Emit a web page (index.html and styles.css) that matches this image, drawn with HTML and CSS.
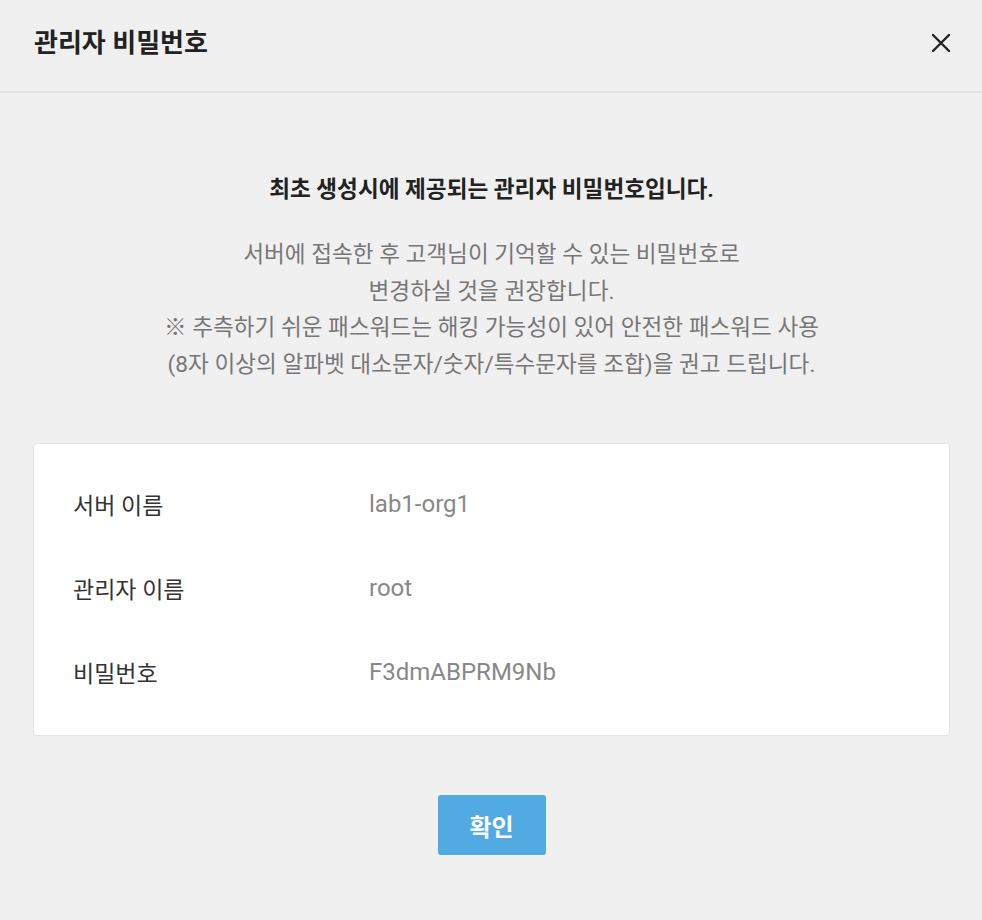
FILE: index.html
```html
<!DOCTYPE html>
<html lang="ko">
<head>
    <meta charset="UTF-8">
    <meta name="viewport" content="width=device-width, initial-scale=1.0">
    <title>관리자 비밀번호</title>
    <link rel="stylesheet" href="styles.css">
</head>
<body>

    <div class="dialog">
        <div class="dialog-header">
            <h1>관리자 비밀번호</h1>
            <button class="close" aria-label="닫기">
                <svg width="20" height="20" viewBox="0 0 20 20">
                    <path d="M2 2 L18 18 M18 2 L2 18" stroke="#222" stroke-width="2.4" stroke-linecap="round" fill="none"/>
                </svg>
            </button>
        </div>

        <div class="dialog-body">
            <h2>최초 생성시에 제공되는 관리자 비밀번호입니다.</h2>
            <p class="notice">
                서버에 접속한 후 고객님이 기억할 수 있는 비밀번호로<br>
                변경하실 것을 권장합니다.<br>
                ※ 추측하기 쉬운 패스워드는 해킹 가능성이 있어 안전한 패스워드 사용<br>
                (8자 이상의 알파벳 대소문자/숫자/특수문자를 조합)을 권고 드립니다.
            </p>

            <div class="info-card">
                <div class="info-row">
                    <span class="label">서버 이름</span>
                    <span class="value">lab1-org1</span>
                </div>
                <div class="info-row">
                    <span class="label">관리자 이름</span>
                    <span class="value">root</span>
                </div>
                <div class="info-row">
                    <span class="label">비밀번호</span>
                    <span class="value">F3dmABPRM9Nb</span>
                </div>
            </div>

            <div class="actions">
                <button class="button">확인</button>
            </div>
        </div>
    </div>

</body>
</html>
```

FILE: styles.css
```css
body {
    margin: 0;
    padding: 0;
    font-family: Roboto, "Noto Sans CJK KR", sans-serif;
    background-color: #f0f0f0;
    color: #222;
}

.dialog {
    width: 100%;
}

.dialog-header {
    height: 91px;
    display: flex;
    align-items: center;
    justify-content: space-between;
    padding: 0 31px 0 34px;
    border-bottom: 2px solid #e1e1e1;
}

.dialog-header h1 {
    margin: 0;
    font-size: 26px;
    line-height: 36px;
    font-weight: bold;
    color: #222;
    padding-bottom: 6px;
}

.close {
    background: none;
    border: none;
    padding: 0;
    width: 20px;
    height: 20px;
    cursor: pointer;
    margin-bottom: 5px;
}

.dialog-body {
    padding: 79px 32px 0 33px;
    text-align: center;
}

.dialog-body h2 {
    margin: 0;
    font-size: 22.6px;
    line-height: 36px;
    font-weight: bold;
    color: #222;
}

.notice {
    margin: 29px 0 0;
    font-size: 22.6px;
    line-height: 36.6px;
    color: #777;
}

/* Карточка с данными */
.info-card {
    margin-top: 60px;
    background: #fff;
    border: 1px solid #e3e3e3;
    border-radius: 4px;
    padding: 18px 0 21px;
    text-align: left;
}

.info-row {
    height: 84px;
    display: flex;
    align-items: center;
}

.info-row .label {
    width: 296px;
    padding-left: 39px;
    font-size: 23px;
    color: #333;
}

.info-row .value {
    font-size: 24px;
    color: #888;
}

.actions {
    margin-top: 59px;
}

.button {
    width: 108px;
    height: 60px;
    border: none;
    border-radius: 3px;
    background-color: #52aae3;
    color: #fff;
    font-family: Roboto, "Noto Sans CJK KR", sans-serif;
    font-size: 24px;
    font-weight: bold;
    cursor: pointer;
}
```
